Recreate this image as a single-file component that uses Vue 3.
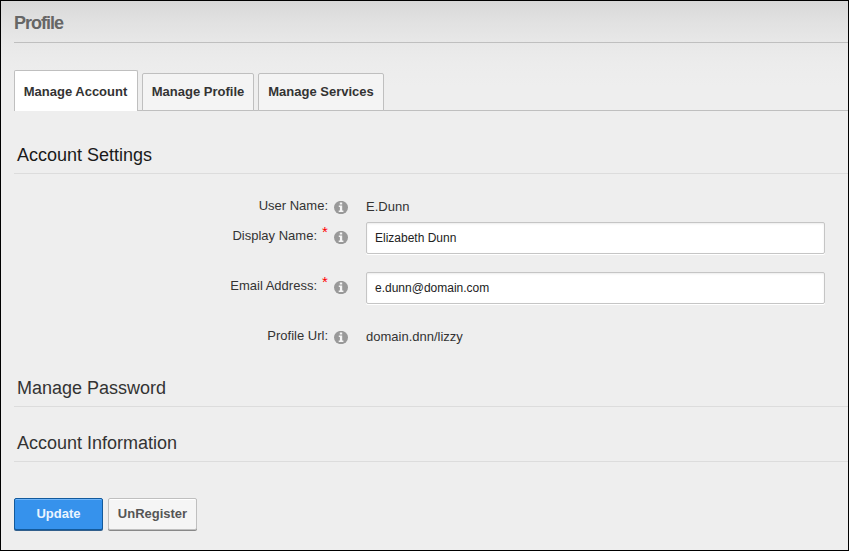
<script setup>
import { ref } from 'vue'

const tabs = ['Manage Account', 'Manage Profile', 'Manage Services']
const active = ref(0)
const fields = ref([
  { id: 'user', label: 'User Name:', value: 'E.Dunn' },
  { id: 'display', label: 'Display Name:', value: 'Elizabeth Dunn', required: true },
  { id: 'email', label: 'Email Address:', value: 'e.dunn@domain.com', required: true },
  { id: 'url', label: 'Profile Url:', value: 'domain.dnn/lizzy' },
])
</script>

<template>
  <main class="page">
    <h1 class="title">Profile</h1>
    <nav class="tabs">
      <button
        v-for="(tab, i) in tabs"
        :key="tab"
        class="tab"
        :class="['tab-' + i, { active: i === active }]"
        @click="active = i"
      >{{ tab }}</button>
    </nav>

    <h2 class="section first">Account Settings</h2>
    <form class="form" @submit.prevent>
      <div v-for="f in fields" :key="f.id" class="row" :class="['row-' + f.id, { editable: f.required }]">
        <div class="label-cell">
          <span class="label">{{ f.label }}</span>
          <span v-if="f.required" class="star">*</span>
          <svg class="info" viewBox="0 0 14 13" width="14" height="13">
            <ellipse cx="7" cy="6.500" rx="7" ry="6.700" fill="#999" />
            <path d="M5.800 1.500h2.400v2H5.800zM4.800 4.500h3.400v5h1.200V11H4.700V9.500h1.200V6H4.800z" fill="#f5f5f5" />
          </svg>
        </div>
        <input v-if="f.required" v-model="f.value" class="input" type="text" />
        <span v-else class="value">{{ f.value }}</span>
      </div>
    </form>

    <h2 class="section">Manage Password</h2>
    <h2 class="section information">Account Information</h2>

    <div class="actions">
      <button class="btn primary">Update</button>
      <button class="btn">UnRegister</button>
    </div>
  </main>
</template>

<style>
body {
  margin: 0;
}
</style>

<style scoped>
.page {
  box-sizing: border-box;
  width: 849px;
  height: 551px;
  border: 1px solid #000;
  padding-left: 13px;
  overflow: hidden;
  background: linear-gradient(#d8d8d8 0, #e1e1e1 20px, #e8e8e8 42px, #ececec 62px, #eee 85px);
  font-family: "Liberation Sans", Arial, sans-serif;
  font-size: 13px;
  color: #333;
}
.title {
  box-sizing: border-box;
  height: 42px;
  margin: 0 0 27px;
  padding-top: 12px;
  border-bottom: 1px solid #bfbfbf;
  font-size: 18px;
  line-height: 21px;
  letter-spacing: -1px;
  color: #666;
}
.tabs {
  display: flex;
  align-items: flex-end;
  gap: 4px;
  height: 41px;
  box-shadow: inset 0 -1px #bfbfbf;
}
.tab {
  box-sizing: border-box;
  height: 38px;
  padding: 0;
  border: 1px solid #bfbfbf;
  border-radius: 2px 2px 0 0;
  background: #f4f4f4;
  font: bold 13px/36px "Liberation Sans", Arial, sans-serif;
  color: #333;
}
.tab-0 { width: 124px; }
.tab-1 { width: 112px; }
.tab-2 { width: 126px; }
.tab.active {
  height: 41px;
  padding: 2px 1px 0 0;
  border-bottom: 0;
  background: #fff;
}
.section {
  box-sizing: border-box;
  height: 30px;
  margin: 0;
  padding: 1px 0 0 3px;
  border-bottom: 1px solid #dcdcdc;
  font-size: 18px;
  font-weight: normal;
  line-height: 21px;
}
.first {
  margin-top: 33px;
  color: #1a1a1a;
}
.form {
  display: flex;
  flex-direction: column;
  height: 203px;
  padding-top: 22px;
  box-sizing: border-box;
}
.row {
  display: flex;
  height: 26px;
}
.row.editable { height: 50px; }
.row-url { margin-top: 4px; }
.label-cell {
  display: flex;
  justify-content: flex-end;
  width: 334px;
  line-height: 20px;
}
.editable .label-cell { line-height: 28px; }
.row-email .label { margin-right: 1px; }
.row-email .star { margin-left: 4px; }
.star {
  width: 6px;
  margin-left: 5px;
  color: #f00;
  font-size: 15px;
  line-height: 20px;
}
.info {
  margin: 5px 0 0 6px;
}
.editable .info { margin-top: 9px; }
.value {
  margin-left: 18px;
  line-height: 22px;
}
.input {
  box-sizing: border-box;
  width: 459px;
  height: 32px;
  margin-left: 18px;
  padding: 0 8px;
  border: 1px solid #c5c5c5;
  border-radius: 2px;
  background: #fff;
  box-shadow: 0 1px #fff, inset 0 1px 2px rgba(0, 0, 0, 0.08);
  font: 12px "Liberation Sans", Arial, sans-serif;
  color: #222;
  outline: none;
}
.information { margin-top: 25px; }
.actions {
  display: flex;
  gap: 5px;
  margin-top: 36px;
}
.btn {
  box-sizing: border-box;
  width: 89px;
  height: 32px;
  padding: 0 0 1px;
  border: 1px solid #bfbfbf;
  border-radius: 2px;
  background: #f5f5f5;
  box-shadow: 0 1px #888, inset 0 1px #fff;
  font: bold 13px "Liberation Sans", Arial, sans-serif;
  color: #555;
}
.btn.primary {
  border-color: #135a9c;
  background: #3692ec;
  box-shadow: 0 1px #315f8c, inset 0 1px #6eb5fa;
  color: #eaf4ff;
}
</style>
